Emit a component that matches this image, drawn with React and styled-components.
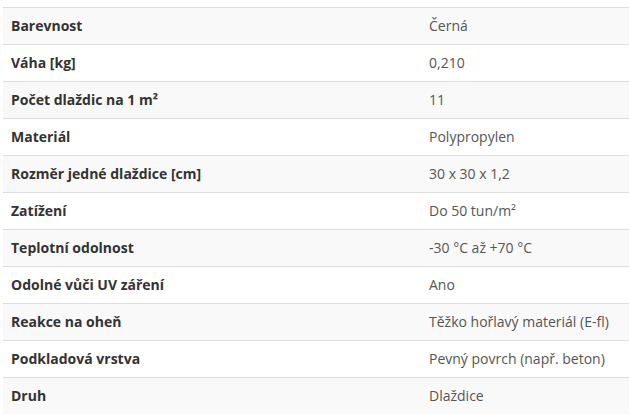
import React from "react";
import styled, { createGlobalStyle } from "styled-components";

const GlobalStyle = createGlobalStyle`
  html, body {
    margin: 0;
    padding: 0;
    background: #fff;
    overflow: hidden;
  }
  body {
    font-family: "Open Sans", "Liberation Sans", sans-serif;
    font-size: 14px;
    line-height: 20px;
    color: #333;
  }
`;

const ParamsWrapper = styled.div`
  padding: 7px 0 0 3px;
  width: 640px;
`;

const ParamsTable = styled.table`
  width: 100%;
  border-collapse: collapse;
  border-spacing: 0;
`;

const Row = styled.tr`
  background-color: ${(p) => (p.$striped ? "#f9f9f9" : "#fff")};
`;

const LabelCell = styled.th`
  width: 418px;
  box-sizing: border-box;
  text-align: left;
  padding: 8px 8px;
  font-weight: 700;
  color: #333;
  border-top: 1px solid #ddd;
  vertical-align: top;
`;

const ValueCell = styled.td`
  padding: 8px 8px;
  color: #555;
  border-top: 1px solid #ddd;
  vertical-align: top;
`;

const params = [
  ["Barevnost", "Černá"],
  ["Váha [kg]", "0,210"],
  [<>Počet dlaždic na 1 m²</>, "11"],
  ["Materiál", "Polypropylen"],
  ["Rozměr jedné dlaždice [cm]", "30 x 30 x 1,2"],
  ["Zatížení", "Do 50 tun/m²"],
  ["Teplotní odolnost", "-30 °C až +70 °C"],
  ["Odolné vůči UV záření", "Ano"],
  ["Reakce na oheň", "Těžko hořlavý materiál (E-fl)"],
  ["Podkladová vrstva", "Pevný povrch (např. beton)"],
  ["Druh", "Dlaždice"]
];

const App = () => {
  return (
    <>
      <GlobalStyle />
      <ParamsWrapper>
        <ParamsTable>
          <tbody>
            {params.map(([label, value], i) => (
              <Row key={i} $striped={i % 2 === 0}>
                <LabelCell>{label}</LabelCell>
                <ValueCell>{value}</ValueCell>
              </Row>
            ))}
          </tbody>
        </ParamsTable>
      </ParamsWrapper>
    </>
  );
};

export default App;
